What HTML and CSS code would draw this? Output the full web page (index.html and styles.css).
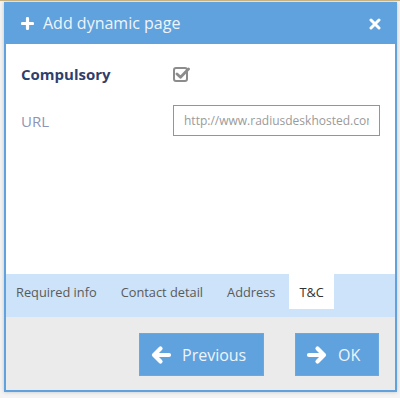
FILE: index.html
```html
<!DOCTYPE html>
<html lang="en">
<head>
    <meta charset="UTF-8">
    <title>Add dynamic page</title>
    <link rel="stylesheet" href="styles.css">
</head>
<body>
    <div class="window">
        <div class="window-header">
            <svg class="header-icon" width="13" height="13" viewBox="0 0 13 13">
                <path d="M6.5 1.5 V11.5 M1.5 6.5 H11.5" stroke="#fff" stroke-width="3.2" stroke-linecap="round"/>
            </svg>
            <span class="window-title">Add dynamic page</span>
            <svg class="close-icon" width="12" height="12" viewBox="0 0 12 12">
                <path d="M2 2 L10 10 M10 2 L2 10" stroke="#fff" stroke-width="3" stroke-linecap="round"/>
            </svg>
        </div>

        <div class="window-body">
            <div class="field-row">
                <label class="field-label strong">Compulsory</label>
                <svg class="check-icon" width="17" height="16" viewBox="0 0 17 16">
                    <rect x="1" y="2" width="13" height="13" rx="2" fill="none" stroke="#8c8c8c" stroke-width="2"/>
                    <path d="M4 8 L7.5 11.2 L15.5 3" fill="none" stroke="#8c8c8c" stroke-width="2.8" stroke-linecap="round" stroke-linejoin="round"/>
                </svg>
            </div>
            <div class="field-row">
                <label class="field-label light">URL</label>
                <input class="field-input" type="text" placeholder="http://www.radiusdeskhosted.com">
            </div>
        </div>

        <div class="tab-bar">
            <div class="tab">Required info</div>
            <div class="tab">Contact detail</div>
            <div class="tab">Address</div>
            <div class="tab active">T&amp;C</div>
        </div>

        <div class="window-footer">
            <button class="btn btn-prev">
                <svg width="22" height="20" viewBox="0 0 22 20">
                    <path d="M19 10 H4 M10.5 3.5 L4 10 L10.5 16.5" fill="none" stroke="#fff" stroke-width="4.2" stroke-linecap="round" stroke-linejoin="round"/>
                </svg>
                Previous
            </button>
            <button class="btn btn-ok">
                <svg width="22" height="20" viewBox="0 0 22 20">
                    <path d="M3 10 H18 M11.5 3.5 L18 10 L11.5 16.5" fill="none" stroke="#fff" stroke-width="4.2" stroke-linecap="round" stroke-linejoin="round"/>
                </svg>
                OK
            </button>
        </div>
    </div>
</body>
</html>
```

FILE: styles.css
```css
html, body {
    margin: 0;
    height: 100%;
}
body {
    font-family: 'Open Sans', sans-serif;
    background-color: #f4f4f4;
    border-top: 1px solid #c8b283;
    padding: 1px 0 0 4px;
    box-sizing: border-box;
}
.window {
    width: 393px;
    border: 2px solid #5fa2dd;
    border-top: none;
    box-sizing: border-box;
    background-color: #ffffff;
    box-shadow: 0 0 4px rgba(0, 0, 0, 0.2);
}
.window-header {
    height: 42px;
    background-color: #5fa2dd;
    display: flex;
    align-items: center;
    padding: 0 16px 0 15px;
    margin: 0 -2px;
}
.header-icon {
    margin-left: 2px;
    margin-right: 9px;
}
.window-title {
    color: #eef4fb;
    font-size: 16px;
    flex: 1;
}
.close-icon {
    margin-top: 1px;
}
.window-body {
    height: 230px;
    padding: 14px 15px 0 15px;
    box-sizing: border-box;
}
.field-row {
    display: flex;
    align-items: center;
    height: 31px;
    margin-bottom: 16px;
}
.field-label {
    width: 152px;
    font-size: 15px;
}
.field-label.strong {
    font-weight: bold;
    color: #2f3f6d;
}
.field-label.light {
    color: #8c95b8;
}
.field-input {
    width: 207px;
    height: 31px;
    box-sizing: border-box;
    border: 1px solid #5fa2dd;
    padding: 0 10px;
    font-family: 'Open Sans', sans-serif;
    font-size: 12px;
    color: #666;
    outline: none;
}
.field-input::placeholder {
    color: #9a9a9a;
}
.tab-bar {
    height: 43px;
    background-color: #cce3f9;
    display: flex;
    gap: 4px;
    align-items: flex-start;
}
.tab {
    height: 35px;
    padding: 0 10px;
    display: flex;
    align-items: center;
    font-size: 12.8px;
    color: #5a5a5a;
}
.tab.active {
    background-color: #ffffff;
    color: #333;
}
.window-footer {
    height: 73px;
    background-color: #ebebeb;
    display: flex;
    justify-content: flex-end;
    gap: 31px;
    padding: 16px 16px 0 0;
    box-sizing: border-box;
}
.btn {
    height: 43px;
    background-color: #5fa2dd;
    border: 1px solid #6aa8df;
    color: #eef4fb;
    font-family: 'Open Sans', sans-serif;
    font-size: 16px;
    display: flex;
    align-items: center;
    gap: 10px;
    cursor: pointer;
}
.btn-prev {
    width: 125px;
    padding-left: 10px;
}
.btn-ok {
    width: 84px;
    padding-left: 10px;
}
```
